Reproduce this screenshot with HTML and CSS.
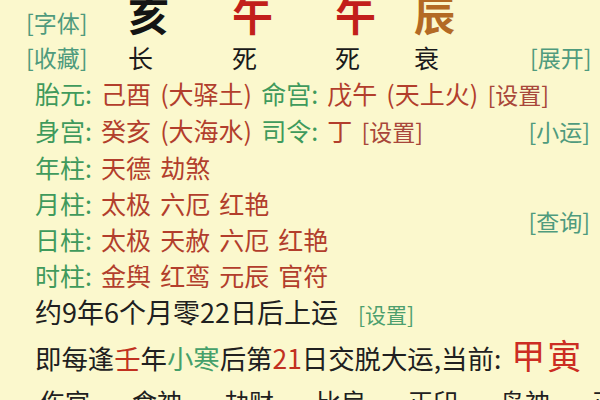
FILE: index.html
```html
<!DOCTYPE html>
<html lang="zh-CN">
<head>
<meta charset="utf-8">
<link rel="stylesheet" href="styles.css">
</head>
<body>
<div class="page">
  <div class="pillars">
    <span class="tag first">[字体]</span>
    <span class="big black">亥</span>
    <span class="big red">午</span>
    <span class="big red">午</span>
    <span class="big brown">辰</span>
    <span></span>

    <span class="tag second">[收藏]</span>
    <span class="stage">长</span>
    <span class="stage">死</span>
    <span class="stage">死</span>
    <span class="stage">衰</span>
    <span class="tag second">[展开]</span>
  </div>

  <div class="line">
    <span class="lab">胎元:</span> <span class="val">己酉 (大驿土)</span> <span class="lab">命宫:</span> <span class="val">戊午 (天上火)</span> <span class="set">[设置]</span>
  </div>
  <div class="line split">
    <span><span class="lab">身宫:</span> <span class="val">癸亥 (大海水)</span> <span class="lab">司令:</span> <span class="val">丁</span> <span class="set">[设置]</span></span>
    <span class="tag">[小运]</span>
  </div>

  <div class="shensha">
    <div class="sslist">
      <div class="line"><span class="lab">年柱:</span> <span class="val">天德 劫煞</span></div>
      <div class="line"><span class="lab">月柱:</span> <span class="val">太极 六厄 红艳</span></div>
      <div class="line"><span class="lab">日柱:</span> <span class="val">太极 天赦 六厄 红艳</span></div>
      <div class="line"><span class="lab">时柱:</span> <span class="val">金舆 红鸾 元辰 官符</span></div>
    </div>
    <span class="tag">[查询]</span>
  </div>

  <div class="plain l9">约9年6个月零22日后上运 <span class="set green">[设置]</span></div>
  <div class="plain l10">即每逢<span class="r">壬</span>年<span class="g">小寒</span>后第<span class="r">21</span>日交脱大运,当前: <span class="cur">甲寅</span></div>
  <div class="gods">
    <span>伤官</span><span>食神</span><span>劫财</span><span>比肩</span><span>正印</span><span>枭神</span><span>正印</span>
  </div>
</div>
</body>
</html>
```

FILE: styles.css
```css
html, body {
  margin: 0;
  padding: 0;
  background: #fbf8cd;
}
body {
  width: 600px;
  height: 400px;
  overflow: hidden;
  font-family: "Noto Sans CJK SC", "Noto Sans", sans-serif;
  color: #1e1e1a;
}
.page {
  padding-left: 35px;
  padding-right: 10px;
}
.pillars {
  display: grid;
  grid-template-columns: 102px 104px 103px 79px 116px 1fr;
  grid-template-rows: 48px 35px;
  margin-left: -9px;
  margin-top: -8px;
}
.tag {
  font-size: 23px;
  color: #4f9b7d;
  white-space: nowrap;
}
.first {
  align-self: end;
  line-height: 36px;
}
.second {
  line-height: 35px;
}
.big {
  font-size: 41px;
  line-height: 42px;
  font-weight: 700;
  align-self: start;
}
.black { color: #141414; }
.red { color: #c21f1a; }
.brown { color: #b36a24; }
.stage {
  font-size: 25px;
  line-height: 35px;
  color: #1a1a1a;
}
.line {
  font-size: 25px;
  line-height: 36px;
  word-spacing: 3.5px;
  white-space: nowrap;
}
.split {
  display: flex;
  justify-content: space-between;
  align-items: center;
}
.lab { color: #3f9a5c; }
.val { color: #b23e2c; }
.set {
  color: #a8473a;
  font-size: 23px;
}
.shensha {
  display: flex;
  align-items: center;
  justify-content: space-between;
}
.plain {
  color: #202020;
  font-size: 27px;
  white-space: nowrap;
}
.l9 {
  line-height: 48px;
  margin-top: -5px;
}
.l10 {
  font-size: 26.4px;
  line-height: 34px;
}
.set.green {
  color: #4d9f6e;
  font-size: 21px;
  margin-left: 14px;
}
.r { color: #c1311f; }
.g { color: #45a06a; }
.cur {
  color: #cc2d22;
  font-size: 34px;
  line-height: 1;
  letter-spacing: 2px;
  margin-left: 4px;
}
.gods {
  display: grid;
  grid-template-columns: repeat(7, 92px);
  font-size: 25px;
  line-height: 36px;
  margin-top: 8px;
  margin-left: 5px;
  color: #202020;
  white-space: nowrap;
}
```
